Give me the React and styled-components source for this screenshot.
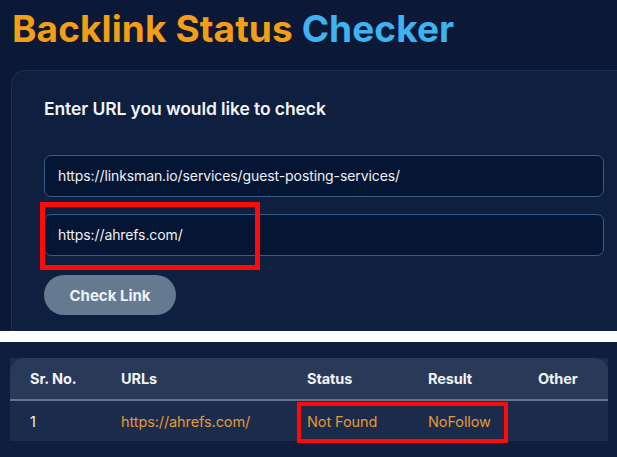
import React from "react";
import styled, { createGlobalStyle } from "styled-components";

const Global = createGlobalStyle`
  html, body { margin: 0; padding: 0; background: #0d1a37; }
  body { width: 617px; height: 457px; overflow: hidden; font-family: Inter, "Noto Sans", sans-serif; }
`;

const Page = styled.div`
  width: 617px;
  height: 457px;
  display: flex;
  flex-direction: column;
  overflow: hidden;
`;

const Top = styled.section`
  height: 331px;
  background: #0c1936;
  display: flex;
  flex-direction: column;
  overflow: hidden;
`;

const Title = styled.h1`
  margin: 0;
  padding: 7px 0 0 12px;
  height: 70px;
  box-sizing: border-box;
  font-size: 37px;
  line-height: 44px;
  font-weight: 700;
  letter-spacing: 0.1px;
  white-space: nowrap;
`;

const Word = styled.span`
  color: ${(p) => p.$c};
`;

const Panel = styled.div`
  margin-left: 11px;
  margin-right: -40px;
  flex: 1;
  background: #0f1f3f;
  border: 1px solid #1d2f52;
  border-bottom: none;
  border-radius: 14px 14px 0 0;
  padding: 27px 0 0 32px;
  position: relative;
`;

const Label = styled.div`
  color: #f2f4f8;
  font-size: 17.5px;
  font-weight: 600;
  line-height: 22px;
  letter-spacing: -0.1px;
`;

const Form = styled.div`
  margin-top: 35px;
  width: 560px;
  display: flex;
  flex-direction: column;
  gap: 17px;
  position: relative;
`;

const Input = styled.div`
  height: 42px;
  box-sizing: border-box;
  border: 1.5px solid #365b86;
  border-radius: 7px;
  background: #051634;
  color: #eef1f6;
  font-size: 14px;
  line-height: 39px;
  padding-left: 13px;
  letter-spacing: -0.1px;
`;

const Button = styled.button`
  margin-top: 2px;
  width: 132px;
  height: 40px;
  border: none;
  border-radius: 20px;
  background: #657a90;
  color: #eef1f5;
  font-family: inherit;
  font-size: 15px;
  font-weight: 700;
  padding: 0;
`;

const Highlight = styled.div`
  position: absolute;
  box-sizing: border-box;
  border: ${(p) => p.$w}px solid #ff0a0a;
  left: ${(p) => p.$x}px;
  top: ${(p) => p.$y}px;
  width: ${(p) => p.$width}px;
  height: ${(p) => p.$height}px;
  pointer-events: none;
`;

const Gap = styled.div`
  height: 11px;
  background: #ffffff;
`;

const Bottom = styled.section`
  flex: 1;
  background: #0f1e3e;
  padding: 16px 9px 0 10px;
  position: relative;
`;

const Table = styled.div`
  width: 598px;
  background: #1b2b4c;
`;

const Row = styled.div`
  display: grid;
  grid-template-columns: 91px 186px 121px 110px 90px;
  align-items: center;
  height: ${(p) => (p.$head ? "41px" : "40px")};
  background: ${(p) => (p.$head ? "#293a59" : "#1b2b4c")};
  border-radius: ${(p) => (p.$head ? "14px 14px 0 0" : "0")};
  border-bottom: ${(p) => (p.$head ? "2px solid #64738f" : "none")};
`;

const Cell = styled.div`
  padding-left: 20px;
  font-size: 14.5px;
  font-weight: ${(p) => (p.$head ? 700 : 400)};
  color: ${(p) => p.$c || "#f1f3f7"};
  white-space: nowrap;
  letter-spacing: -0.1px;
`;

export default function App() {
  return (
    <Page>
      <Global />
      <Top>
        <Title>
          <Word $c="#f49d17">Backlink Status </Word>
          <Word $c="#3fb3f2">Checker</Word>
        </Title>
        <Panel>
          <Label>Enter URL you would like to check</Label>
          <Form>
            <Input>https://linksman.io/services/guest-posting-services/</Input>
            <Input>https://ahrefs.com/</Input>
            <Button>Check Link</Button>
            <Highlight $w={5} $x={-4} $y={47} $width={220} $height={68} />
          </Form>
        </Panel>
      </Top>
      <Gap />
      <Bottom>
        <Table>
          <Row $head>
            <Cell $head>Sr. No.</Cell>
            <Cell $head>URLs</Cell>
            <Cell $head>Status</Cell>
            <Cell $head>Result</Cell>
            <Cell $head>Other</Cell>
          </Row>
          <Row>
            <Cell>1</Cell>
            <Cell $c="#e39a33">https://ahrefs.com/</Cell>
            <Cell $c="#e39a33">Not Found</Cell>
            <Cell $c="#e39a33">NoFollow</Cell>
            <Cell></Cell>
          </Row>
        </Table>
        <Highlight $w={4} $x={297} $y={60} $width={211} $height={41} />
      </Bottom>
    </Page>
  );
}
